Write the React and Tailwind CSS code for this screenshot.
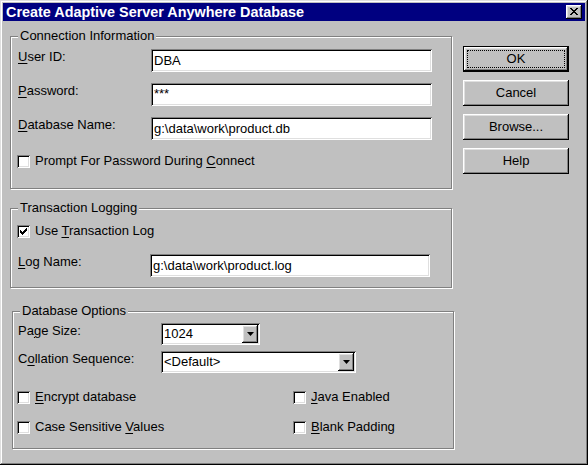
import React from "react";

const raised =
  "shadow-[inset_-1px_-1px_0_#000,inset_1px_1px_0_#fff,inset_-2px_-2px_0_#808080,inset_2px_2px_0_#dfdfdf]";
const sunken =
  "shadow-[inset_1px_1px_0_#808080,inset_-1px_-1px_0_#fff,inset_2px_2px_0_#000,inset_-2px_-2px_0_#dfdfdf]";

const CloseGlyph = () => (
  <svg width="8" height="7" viewBox="0 0 8 7" shapeRendering="crispEdges">
    <path
      fill="#000"
      d="M0 0h2v1H0zM6 0h2v1H6zM1 1h2v1H1zM5 1h2v1H5zM2 2h4v1H2zM3 3h2v1H3zM2 4h4v1H2zM1 5h2v1H1zM5 5h2v1H5zM0 6h2v1H0zM6 6h2v1H6z"
    />
  </svg>
);

const Group = ({ title, className, children }) => (
  <div
    className={
      "relative w-[442px] border border-[#808080] shadow-[1px_1px_0_#fff,inset_1px_1px_0_#fff] " +
      className
    }
  >
    <span className="absolute left-[7px] top-[-9px] bg-[#c0c0c0] px-[2px] whitespace-nowrap">
      {title}
    </span>
    {children}
  </div>
);

const TextBox = ({ value, className }) => (
  <div className={"h-[23px] bg-white pl-[3px] flex items-center whitespace-nowrap " + sunken + " " + className}>
    {value}
  </div>
);

const Combo = ({ value, className }) => (
  <div className={"h-[22px] bg-white flex items-center justify-between p-[2px] " + sunken + " " + className}>
    <span className="pl-[1px]">{value}</span>
    <div className={"w-[16px] h-[18px] bg-[#c0c0c0] flex items-center justify-center " + raised}>
      <svg width="7" height="4" viewBox="0 0 7 4">
        <polygon points="0,0 7,0 3.5,4" fill="#000" />
      </svg>
    </div>
  </div>
);

const CheckBox = ({ checked, children }) => (
  <div className="flex items-center gap-[5px]">
    <div className={"w-[13px] h-[13px] bg-white flex items-center justify-center " + sunken}>
      {checked && (
        <svg width="7" height="7" viewBox="0 0 7 7" shapeRendering="crispEdges">
          <path
            fill="#000"
            d="M6 0h1v3H6zM5 1h1v3H5zM4 2h1v3H4zM3 3h1v3H3zM2 4h1v3H2zM1 3h1v3H1zM0 2h1v3H0z"
          />
        </svg>
      )}
    </div>
    <span className="whitespace-nowrap">{children}</span>
  </div>
);

const Button = ({ children, isDefault }) => (
  <div
    className={
      "relative w-[106px] h-[26px] bg-[#c0c0c0] flex items-center justify-center " +
      (isDefault ? "border border-black " : "") +
      raised
    }
  >
    {isDefault && <div className="absolute inset-[3px] border border-dotted border-black" />}
    <span className="relative">{children}</span>
  </div>
);

const U = ({ children }) => <span className="underline underline-offset-[2px]">{children}</span>;

export default function App() {
  return (
    <div
      className={
        "w-[588px] h-[465px] bg-[#c0c0c0] p-[3px] text-[13px] leading-[16px] text-black font-['Liberation_Sans',Arial,sans-serif] shadow-[inset_-1px_-1px_0_#000,inset_1px_1px_0_#dfdfdf,inset_-2px_-2px_0_#808080,inset_2px_2px_0_#fff]"
      }
    >
      <div className="h-[18px] bg-[#000080] flex items-center justify-between pl-[3px] pr-[3px]">
        <span className="text-white font-bold text-[14.4px] whitespace-nowrap">
          Create Adaptive Server Anywhere Database
        </span>
        <div className={"w-[16px] h-[14px] bg-[#c0c0c0] flex items-center justify-center pb-[1px] " + raised}>
          <CloseGlyph />
        </div>
      </div>

      <div className="flex pl-[7px]">
        <div className="w-[444px] pt-[15px] flex flex-col">
          <Group title="Connection Information" className="h-[153px] pt-[12px] pl-[7px]">
            <div className="flex flex-col gap-[11px]">
              <div className="flex h-[23px]">
                <span className="w-[133px]">
                  <U>U</U>ser ID:
                </span>
                <TextBox value="DBA" className="w-[281px]" />
              </div>
              <div className="flex h-[23px]">
                <span className="w-[133px]">
                  <U>P</U>assword:
                </span>
                <TextBox value="***" className="w-[281px] !items-start pt-[3px]" />
              </div>
              <div className="flex h-[23px]">
                <span className="w-[133px]">
                  <U>D</U>atabase Name:
                </span>
                <TextBox value="g:\data\work\product.db" className="w-[281px]" />
              </div>
            </div>
            <div className="mt-[13px] -ml-[1px]">
              <CheckBox>
                Prompt For Password During <U>C</U>onnect
              </CheckBox>
            </div>
          </Group>

          <Group title="Transaction Logging" className="h-[80px] mt-[19px] pt-[14px] pl-[6px]">
            <CheckBox checked>
              Use <U>T</U>ransaction Log
            </CheckBox>
            <div className="flex h-[23px] mt-[15px] pl-[1px]">
              <span className="w-[132px]">
                <U>L</U>og Name:
              </span>
              <TextBox value="g:\data\work\product.log" className="w-[280px]" />
            </div>
          </Group>

          <Group title="Database Options" className="h-[138px] mt-[23px] ml-[2px] pt-[11px] pl-[5px]">
            <div className="flex flex-col gap-[6px]">
              <div className="flex h-[22px]">
                <span className="w-[143px]">
                  Pa<U>g</U>e Size:
                </span>
                <Combo value="1024" className="w-[99px]" />
              </div>
              <div className="flex h-[22px]">
                <span className="w-[143px]">
                  C<U>o</U>llation Sequence:
                </span>
                <Combo value="<Default>" className="w-[195px]" />
              </div>
            </div>
            <div className="grid grid-cols-[276px_auto] gap-y-[14px] mt-[16px] -ml-[1px]">
              <CheckBox>
                <U>E</U>ncrypt database
              </CheckBox>
              <CheckBox>
                <U>J</U>ava Enabled
              </CheckBox>
              <CheckBox>
                Case Sensitive <U>V</U>alues
              </CheckBox>
              <CheckBox>
                <U>B</U>lank Padding
              </CheckBox>
            </div>
          </Group>
        </div>

        <div className="ml-[9px] pt-[25px] flex flex-col gap-[8px]">
          <Button isDefault>OK</Button>
          <Button>Cancel</Button>
          <Button>Browse...</Button>
          <Button>Help</Button>
        </div>
      </div>
    </div>
  );
}
